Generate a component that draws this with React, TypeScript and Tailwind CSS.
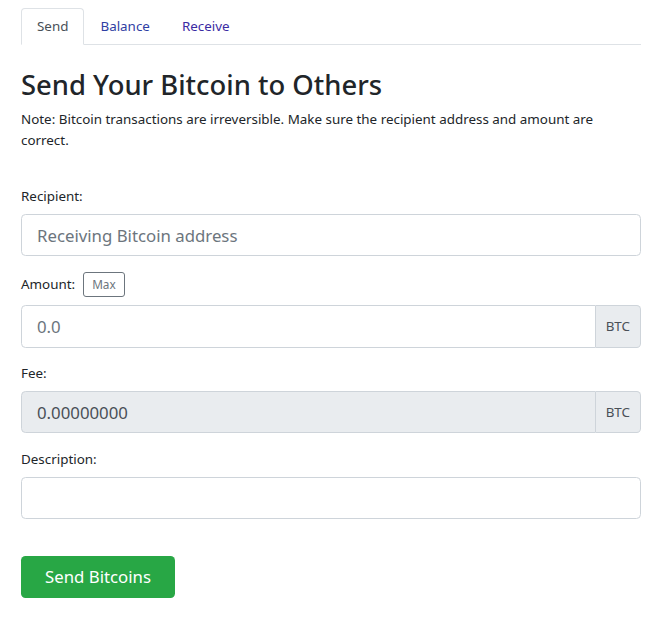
import React from "react";

const font = { fontFamily: '"Segoe UI", "Noto Sans", Roboto, "Liberation Sans", sans-serif' };

function Label({ children }: { children: React.ReactNode }) {
  return <label className="block mb-[7px] text-[13.4px] leading-[21px] text-[#212529]">{children}</label>;
}

export default function App() {
  const [tab, setTab] = React.useState("send");

  return (
    <div className="bg-white min-h-[626px] pl-[21px] pr-[25px] pt-2" style={font}>
      {/* tabs */}
      <ul className="flex border-b border-[#dee2e6] text-[13.4px] leading-[21px]">
        <li className="-mb-px">
          <button
            onClick={() => setTab("send")}
            className="block px-[15px] py-[7px] border border-[#dee2e6] border-b-white rounded-t bg-white text-[#495057]"
          >
            Send
          </button>
        </li>
        <li className="-mb-px">
          <button
            onClick={() => setTab("balance")}
            className="block px-[15px] py-[7px] border border-transparent text-[#2f3ea3]"
          >
            Balance
          </button>
        </li>
        <li className="-mb-px">
          <button
            onClick={() => setTab("receive")}
            className="block px-[15px] py-[7px] border border-transparent text-[#3b2ba3]"
          >
            Receive
          </button>
        </li>
      </ul>

      <h2 className="mt-[23px] mb-[7px] text-[27.4px] leading-[34px] font-medium text-[#212529]">
        Send Your Bitcoin to Others
      </h2>
      <p className="text-[13.4px] leading-[21px] text-[#212529] mb-[35px]">
        Note: Bitcoin transactions are irreversible. Make sure the recipient address and amount are correct.
      </p>

      <div className="mb-[16px]">
        <Label>Recipient:</Label>
        <input
          placeholder="Receiving Bitcoin address"
          className="w-full h-[42px] px-[15px] text-[16.8px] text-[#495057] placeholder:text-[#6c757d] border border-[#ced4da] rounded-[4.5px] outline-none"
        />
      </div>

      <div className="mb-[15px]">
        <div className="flex items-center gap-[8px] h-[25px] mb-[8px]">
          <span className="text-[13.4px] leading-[21px] text-[#212529]">Amount:</span>
          <button className="h-[25px] px-[8px] text-[11.8px] leading-none text-[#6c757d] border border-[#6c757d] rounded-[3px]">
            Max
          </button>
        </div>
        <div className="flex">
          <input
            placeholder="0.0"
            className="flex-1 min-w-0 h-[43px] px-[15px] text-[16.8px] text-[#495057] placeholder:text-[#6c757d] border border-[#ced4da] rounded-l-[4.5px] outline-none"
          />
          <span className="flex items-center px-[10px] text-[13.4px] text-[#495057] bg-[#e9ecef] border border-l-0 border-[#ced4da] rounded-r-[4.5px]">
            BTC
          </span>
        </div>
      </div>

      <div className="mb-[16px]">
        <Label>Fee:</Label>
        <div className="flex">
          <input
            disabled
            value="0.00000000"
            readOnly
            className="flex-1 min-w-0 h-[42px] px-[15px] text-[16.8px] text-[#495057] bg-[#e9ecef] border border-[#ced4da] rounded-l-[4.5px] outline-none"
          />
          <span className="flex items-center px-[10px] text-[13.4px] text-[#495057] bg-[#e9ecef] border border-l-0 border-[#ced4da] rounded-r-[4.5px]">
            BTC
          </span>
        </div>
      </div>

      <div className="mb-[37px]">
        <Label>Description:</Label>
        <input className="w-full h-[42px] px-[15px] text-[16.8px] text-[#495057] border border-[#ced4da] rounded-[4.5px] outline-none" />
      </div>

      <button className="h-[42px] px-[24px] text-[16.8px] text-white bg-[#28a745] rounded-[4.5px]">
        Send Bitcoins
      </button>
    </div>
  );
}
